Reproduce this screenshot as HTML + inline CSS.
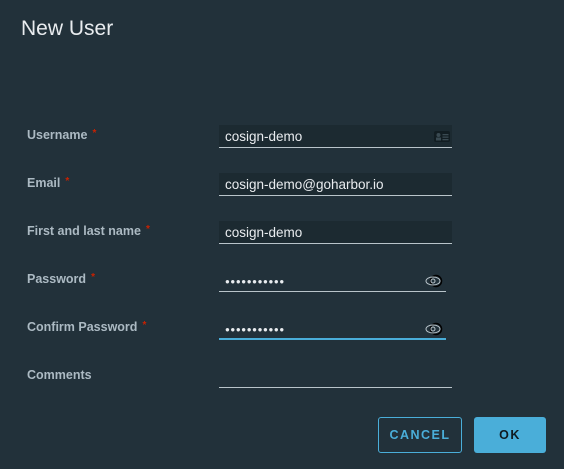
<!DOCTYPE html>
<html><head><style>
body{margin:0;width:564px;height:469px;background:#22313a;font-family:"Liberation Sans",sans-serif;position:relative;overflow:hidden}
.t{position:absolute;left:21px;top:17px;font-size:21px;color:#e9ecef}
.l{position:absolute;left:27px;font-size:12.5px;font-weight:bold;color:#acbac3}
.l b{color:#c92100;font-size:10px;margin-left:5px;vertical-align:top}
.i{position:absolute;left:219px;width:233px;height:23px;background:#1c2a31;border-bottom:1px solid #b9c4ca;color:#e9ecef;font-size:13.5px;line-height:23px;box-sizing:border-box;padding-left:6px}
.p{background:none;width:227px}
.d{font-size:8px;letter-spacing:0.6px;vertical-align:1px}
.btn{position:absolute;top:417px;height:36px;box-sizing:border-box;border-radius:3px;font-size:12.5px;font-weight:bold;letter-spacing:1.5px;text-align:center;line-height:34px}
</style></head><body>
<div class="t">New User</div>
<div class="l" style="top:128px">Username<b>*</b></div>
<div class="l" style="top:176px">Email<b>*</b></div>
<div class="l" style="top:224px">First and last name<b>*</b></div>
<div class="l" style="top:272px">Password<b>*</b></div>
<div class="l" style="top:320px">Confirm Password<b>*</b></div>
<div class="l" style="top:368px">Comments</div>
<div class="i" style="top:125px">cosign-demo<svg style="position:absolute;right:2px;top:6px" width="16" height="11"><rect width="16" height="11" rx="2" fill="#121d22"/><circle cx="4.5" cy="4" r="2" fill="#3a4a52"/><rect x="2" y="6.5" width="5" height="3" fill="#3a4a52"/><rect x="8.5" y="3" width="6" height="1.3" fill="#3a4a52"/><rect x="8.5" y="5.5" width="6" height="1.3" fill="#3a4a52"/><rect x="8.5" y="8" width="6" height="1.3" fill="#3a4a52"/></svg></div>
<div class="i" style="top:173px">cosign-demo@goharbor.io</div>
<div class="i" style="top:221px">cosign-demo</div>
<div class="i p" style="top:269px"><span class="d">●●●●●●●●●●●</span><svg style="position:absolute;right:2px;top:5px" width="20" height="14"><circle cx="12" cy="7" r="5.5" fill="none" stroke="#000" stroke-width="1.5"/><ellipse cx="9" cy="7" rx="7" ry="4" fill="none" stroke="#b9c4ca"/><circle cx="9" cy="7" r="2" fill="none" stroke="#b9c4ca"/></svg></div>
<div class="i p" style="top:317px;border-bottom:2px solid #4aaed9"><span class="d">●●●●●●●●●●●</span><svg style="position:absolute;right:2px;top:5px" width="20" height="14"><circle cx="12" cy="7" r="5.5" fill="none" stroke="#000" stroke-width="1.5"/><ellipse cx="9" cy="7" rx="7" ry="4" fill="none" stroke="#b9c4ca"/><circle cx="9" cy="7" r="2" fill="none" stroke="#b9c4ca"/></svg></div>
<div class="i" style="top:365px;background:none"></div>
<div class="btn" style="left:378px;width:84px;border:1px solid #4aaed9;color:#4aaed9">CANCEL</div>
<div class="btn" style="left:474px;width:72px;background:#4aaed9;color:#0f1a20;line-height:36px">OK</div>
</body></html>
